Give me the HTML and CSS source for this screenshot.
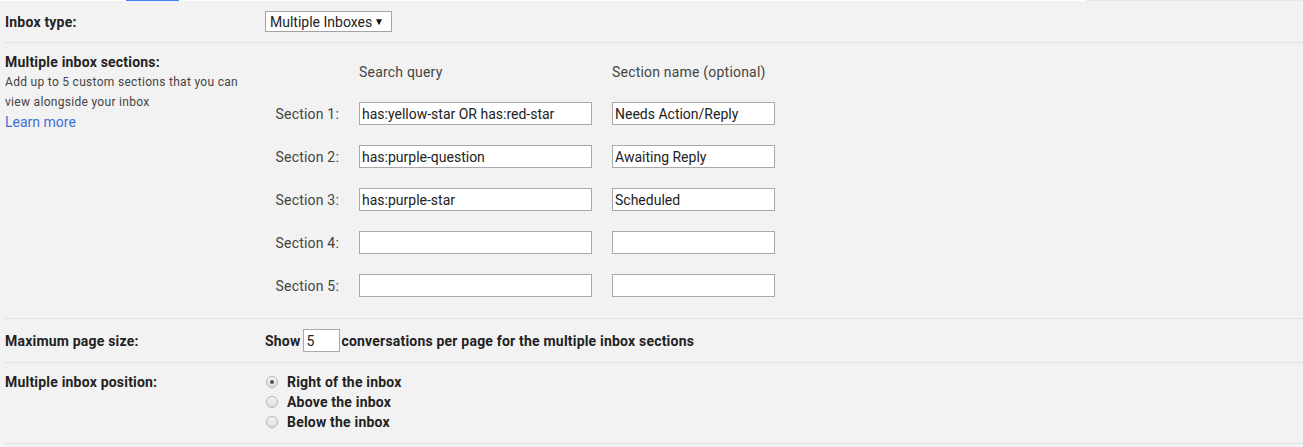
FILE: index.html
```html
<!DOCTYPE html>
<html lang="en">
<head>
<meta charset="utf-8">
<title>Multiple Inboxes settings</title>
<link rel="stylesheet" href="styles.css">
</head>
<body>
<div class="topbar">
  <span class="tb-white tb-a"></span>
  <span class="tb-blue"></span>
  <span class="tb-white tb-b"></span>
  <span class="tb-grey"></span>
</div>
<div class="settings">
  <div class="row row-type">
    <div class="label">Inbox type:</div>
    <div class="value">
      <div class="select"><span class="select-text">Multiple Inboxes</span><span class="caret">▼</span></div>
    </div>
  </div>

  <div class="row row-sections">
    <div class="label-block">
      <div class="label">Multiple inbox sections:</div>
      <div class="desc">Add up to 5 custom sections that you can</div>
      <div class="desc">view alongside your inbox</div>
      <a class="learn" href="#">Learn more</a>
    </div>
    <div class="sections">
      <div></div>
      <div class="col-head">Search query</div>
      <div class="col-head">Section name (optional)</div>

      <div class="sec-label">Section 1:</div>
      <div class="field wide">has:yellow-star OR has:red-star</div>
      <div class="field narrow">Needs Action/Reply</div>

      <div class="sec-label">Section 2:</div>
      <div class="field wide">has:purple-question</div>
      <div class="field narrow">Awaiting Reply</div>

      <div class="sec-label">Section 3:</div>
      <div class="field wide">has:purple-star</div>
      <div class="field narrow">Scheduled</div>

      <div class="sec-label">Section 4:</div>
      <div class="field wide"></div>
      <div class="field narrow"></div>

      <div class="sec-label">Section 5:</div>
      <div class="field wide"></div>
      <div class="field narrow"></div>
    </div>
  </div>

  <div class="row row-size">
    <div class="label">Maximum page size:</div>
    <div class="value size-line">
      <span class="strong">Show</span>
      <div class="field tiny">5</div>
      <span class="strong">conversations per page for the multiple inbox sections</span>
    </div>
  </div>

  <div class="row row-position">
    <div class="label">Multiple inbox position:</div>
    <div class="radios">
      <div class="radio-line"><span class="radio checked"></span><span class="strong">Right of the inbox</span></div>
      <div class="radio-line"><span class="radio"></span><span class="strong">Above the inbox</span></div>
      <div class="radio-line"><span class="radio"></span><span class="strong">Below the inbox</span></div>
    </div>
  </div>
</div>
</body>
</html>
```

FILE: styles.css
```css
* { box-sizing: border-box; }

html, body {
  margin: 0;
  padding: 0;
  background: #f2f2f2;
  font-family: Roboto, "Liberation Sans", Arial, sans-serif;
  color: #222;
  font-size: 14px;
}

.topbar {
  display: flex;
  height: 1px;
}
.tb-white { background: #ffffff; }
.tb-a { width: 126px; }
.tb-blue { width: 53px; background: #4285f4; }
.tb-b { width: 907px; }
.tb-grey { flex: 1; background: #e5e7ea; }

.settings {
  padding-left: 5px;
}

.row {
  display: grid;
  grid-template-columns: 260px 1fr;
  border-bottom: 1px solid #e1e1e1;
}

.label {
  font-weight: 700;
  font-size: 14px;
  letter-spacing: 0.2px;
  line-height: 20px;
  color: #222;
}

.row-type {
  padding: 10px 0;
  align-items: center;
  height: 42px;
}

.select {
  display: inline-flex;
  align-items: center;
  width: 127px;
  height: 21px;
  background: #fff;
  border: 1px solid #a3a3a3;
  padding-left: 4px;
  font-size: 14px;
  color: #222;
}
.select-text { flex: 1; }
.caret {
  font-size: 10px;
  margin-right: 7px;
  color: #111;
}

.row-sections {
  padding: 9px 0 20px;
  height: 276px;
}

.desc {
  font-size: 12px;
  letter-spacing: 0.3px;
  line-height: 20px;
  color: #444;
}

.learn {
  display: block;
  font-size: 14px;
  line-height: 20px;
  color: #3f6fd8;
  text-decoration: none;
}

.sections {
  display: grid;
  grid-template-columns: 74px 233px 163px;
  grid-template-rows: 20px repeat(5, 23px);
  column-gap: 20px;
  row-gap: 20px;
  margin-top: 10px;
  align-items: center;
}
.sections > .col-head { margin-bottom: 1px; }

.col-head {
  font-size: 14px;
  letter-spacing: 0.2px;
  color: #444;
  line-height: 20px;
}

.sec-label {
  font-size: 14px;
  letter-spacing: 0.2px;
  color: #444;
  text-align: right;
  white-space: nowrap;
}

.field {
  height: 23px;
  background: #fff;
  border: 1px solid #a9a9a9;
  font-size: 14px;
  line-height: 22px;
  padding-left: 2px;
  color: #222;
  white-space: nowrap;
  overflow: hidden;
}
.field.wide { width: 233px; }
.field.narrow { width: 163px; }
.field.tiny { width: 37px; margin: 0 1px 0 3px; }

.row-size {
  padding: 10px 0;
  align-items: center;
  height: 44px;
}

.size-line {
  display: flex;
  align-items: center;
}

.strong {
  font-weight: 700;
  font-size: 14px;
  letter-spacing: 0.2px;
  color: #222;
  white-space: nowrap;
}

.row-position {
  padding: 9px 0 11px;
  height: 81px;
}

.radios {
  display: flex;
  flex-direction: column;
}

.radio-line {
  display: flex;
  align-items: center;
  height: 20px;
}

.radio {
  width: 12px;
  height: 12px;
  margin-left: 1px;
  margin-right: 9px;
  border-radius: 50%;
  border: 1px solid #b4b4b4;
  background: linear-gradient(#f6f6f6, #dedede);
  display: flex;
  align-items: center;
  justify-content: center;
}
.radio.checked::after {
  content: "";
  width: 4px;
  height: 4px;
  border-radius: 50%;
  background: #555;
}
```
